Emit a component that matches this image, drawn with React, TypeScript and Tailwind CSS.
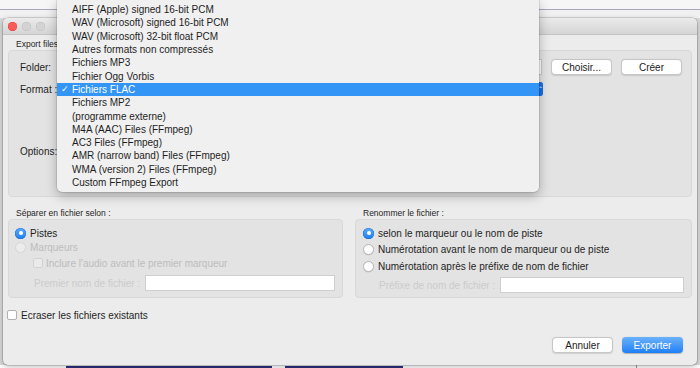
import React from "react";

const FORMATS = [
  "AIFF (Apple) signed 16-bit PCM",
  "WAV (Microsoft) signed 16-bit PCM",
  "WAV (Microsoft) 32-bit float PCM",
  "Autres formats non compressés",
  "Fichiers MP3",
  "Fichier Ogg Vorbis",
  "Fichiers FLAC",
  "Fichiers MP2",
  "(programme externe)",
  "M4A (AAC) Files (FFmpeg)",
  "AC3 Files (FFmpeg)",
  "AMR (narrow band) Files (FFmpeg)",
  "WMA (version 2) Files (FFmpeg)",
  "Custom FFmpeg Export",
];

function Radio({ checked, disabled }: { checked?: boolean; disabled?: boolean }) {
  if (checked) {
    return (
      <span className="flex h-[11px] w-[11px] shrink-0 items-center justify-center rounded-full bg-gradient-to-b from-[#5aabf8] to-[#1d7ef4] shadow-[inset_0_0_0_0.5px_#1a6fd6]">
        <span className="h-[4px] w-[4px] rounded-full bg-white" />
      </span>
    );
  }
  return (
    <span
      className={
        disabled
          ? "h-[11px] w-[11px] shrink-0 rounded-full border border-[#d6d6d6] bg-[#ececec]"
          : "h-[11px] w-[11px] shrink-0 rounded-full border border-[#b4b4b4] bg-white shadow-[0_0.5px_0.5px_rgba(0,0,0,0.1)]"
      }
    />
  );
}

function Check({ disabled }: { disabled?: boolean }) {
  return (
    <span
      className={
        disabled
          ? "h-[10px] w-[10px] shrink-0 rounded-[2px] border border-[#d2d2d2] bg-[#eaeaea]"
          : "h-[10px] w-[10px] shrink-0 rounded-[2px] border border-[#b0b0b0] bg-white"
      }
    />
  );
}

function Btn({ children, primary }: { children: React.ReactNode; primary?: boolean }) {
  return (
    <div
      className={
        primary
          ? "flex h-[16px] w-[61px] items-center justify-center rounded-[4px] bg-gradient-to-b from-[#69b1fa] to-[#1b7ff6] text-[10px] text-white shadow-[0_0.5px_1px_rgba(0,0,0,0.25)]"
          : "flex h-[16px] w-[61px] items-center justify-center rounded-[4px] border border-[#c6c6c6] bg-white text-[10px] text-[#222] shadow-[0_0.5px_1px_rgba(0,0,0,0.12)]"
      }
    >
      {children}
    </div>
  );
}

export default function App() {
  return (
    <div className="relative h-[368px] w-[700px] overflow-hidden bg-[#d9d9d9] font-['Liberation_Sans',Arial,sans-serif] text-[#1e1e1e]">
      {/* app behind the sheet */}
      <div className="flex h-[18px] flex-col bg-white">
        <div className="h-[9px] bg-[#f6f6f6]" />
        <div className="h-[1px] bg-[#a9a7bd]" />
        <div className="flex-1 bg-[#f1f1f1]" />
      </div>

      {/* export window */}
      <div className="relative z-10 mx-[3px] flex h-[347px] flex-col overflow-hidden rounded-[5px] bg-[#ececec] shadow-[0_0_0_0.5px_rgba(0,0,0,0.25),0_2px_6px_rgba(0,0,0,0.25)]">
        <div className="flex h-[17px] shrink-0 items-center gap-[5px] border-b border-[#c4c4c4] bg-gradient-to-b from-[#ebebeb] to-[#d5d5d5] pl-[5px] pt-[1px]">
          <span className="h-[9px] w-[9px] rounded-full bg-[#fc5b57] shadow-[inset_0_0_0_0.5px_#e0443e]" />
          <span className="h-[9px] w-[9px] rounded-full bg-[#d3d3d3] shadow-[inset_0_0_0_0.5px_#bdbdbd]" />
          <span className="h-[9px] w-[9px] rounded-full bg-[#d3d3d3] shadow-[inset_0_0_0_0.5px_#bdbdbd]" />
        </div>

        <div className="pl-[13px] pt-[4px] text-[8.5px] leading-[10px]">Export files</div>

        {/* upper group */}
        <div className="mx-[5px] mt-[1px] flex h-[147px] shrink-0 flex-col rounded-[4px] border border-[#d8d8d8] bg-[#e3e3e3] pl-[11px] pr-[9px] pt-[8px]">
          <div className="flex h-[16px] items-center">
            <span className="w-[42px] text-[10px]">Folder:</span>
            <div className="h-[16px] flex-1 border border-[#c9c9c9] bg-white" />
            <div className="ml-[9px] flex gap-[9px]">
              <Btn>Choisir...</Btn>
              <Btn>Créer</Btn>
            </div>
          </div>
          <div className="mt-[7px] flex h-[14px] items-center pr-[139px]">
            <span className="w-[42px] text-[10px]">Format :</span>
            <div className="flex h-[14px] flex-1 items-center justify-end rounded-[3px] bg-[#3396f6]">
              <span className="flex h-[14px] w-[6px] items-center justify-center rounded-r-[3px] bg-[#1d6fe0] text-[6px] leading-none text-white">
                ⌃
              </span>
            </div>
          </div>
          <div className="mt-[49px] flex h-[12px] items-center">
            <span className="text-[10px]">Options:</span>
          </div>
        </div>

        {/* lower groups */}
        <div className="mx-[5px] mt-[12px] flex gap-[12px]">
          <div className="flex w-[335px] flex-col">
            <div className="h-[9px] pl-[8px] text-[8.5px] leading-[9px]">Séparer en fichier selon :</div>
            <div className="mt-[1px] flex h-[79px] flex-col rounded-[4px] border border-[#d8d8d8] bg-[#e3e3e3] pl-[6px] pr-[7px] pt-[7px] text-[10px]">
              <div className="flex h-[12px] items-center gap-[4px]">
                <Radio checked />
                <span>Pistes</span>
              </div>
              <div className="mt-[2px] flex h-[12px] items-center gap-[4px] text-[#bcbcbc]">
                <Radio disabled />
                <span>Marqueurs</span>
              </div>
              <div className="mt-[4px] flex h-[12px] items-center gap-[3px] pl-[18px] text-[#bcbcbc]">
                <Check disabled />
                <span>Inclure l'audio avant le premier marqueur</span>
              </div>
              <div className="mt-[6px] flex h-[16px] items-center pl-[19px] text-[#cbcbcb]">
                <span className="w-[111px]">Premier nom de fichier :</span>
                <div className="h-[16px] flex-1 border border-[#cfcfcf] bg-white" />
              </div>
            </div>
          </div>

          <div className="flex flex-1 flex-col">
            <div className="h-[9px] pl-[8px] text-[8.5px] leading-[9px]">Renommer le fichier :</div>
            <div className="mt-[1px] flex h-[79px] flex-col rounded-[4px] border border-[#d8d8d8] bg-[#e3e3e3] pl-[7px] pr-[7px] pt-[7px] text-[10px]">
              <div className="flex h-[12px] items-center gap-[4px]">
                <Radio checked />
                <span>selon le marqueur ou le nom de piste</span>
              </div>
              <div className="mt-[4px] flex h-[12px] items-center gap-[4px]">
                <Radio />
                <span>Numérotation avant le nom de marqueur ou de piste</span>
              </div>
              <div className="mt-[5px] flex h-[12px] items-center gap-[4px]">
                <Radio />
                <span>Numérotation après le préfixe de nom de fichier</span>
              </div>
              <div className="mt-[5px] flex h-[16px] items-center pl-[16px] text-[#cbcbcb]">
                <span className="w-[121px]">Préfixe de nom de fichier :</span>
                <div className="h-[16px] flex-1 border border-[#cfcfcf] bg-white" />
              </div>
            </div>
          </div>
        </div>

        <div className="ml-[4px] mt-[12px] flex h-[10px] items-center gap-[4px] text-[10px]">
          <Check />
          <span>Ecraser les fichiers existants</span>
        </div>

        <div className="mr-[14px] mt-[17px] flex justify-end gap-[9px]">
          <Btn>Annuler</Btn>
          <Btn primary>Exporter</Btn>
        </div>
      </div>

      {/* strip of the app visible under the sheet */}
      <div className="flex h-[3px] items-end gap-[13px] bg-white pl-[66px]">
        <span className="h-[2px] w-[206px] bg-[#2b2f7a]" />
        <span className="h-[2px] w-[118px] bg-[#2b2f7a]" />
        <span className="ml-[220px] h-[3px] w-[1px] bg-[#9a9a9a]" />
      </div>

      {/* format popup menu */}
      <div className="absolute left-[57px] top-0 z-20 flex h-[192px] w-[482px] flex-col rounded-b-[5px] bg-[#f0f0f0] py-[3px] text-[10px] shadow-[0_0_0_0.5px_rgba(0,0,0,0.18),0_4px_12px_rgba(0,0,0,0.28)]">
        {FORMATS.map((f, i) => {
          const sel = i === 6;
          return (
            <div
              key={f}
              className={
                sel
                  ? "flex h-[13.3px] items-center bg-[#3396f6] text-white"
                  : "flex h-[13.3px] items-center text-[#1e1e1e]"
              }
            >
              <span className="w-[15px] pl-[4px] text-[9px]">{sel ? "✓" : ""}</span>
              <span>{f}</span>
            </div>
          );
        })}
      </div>
    </div>
  );
}
